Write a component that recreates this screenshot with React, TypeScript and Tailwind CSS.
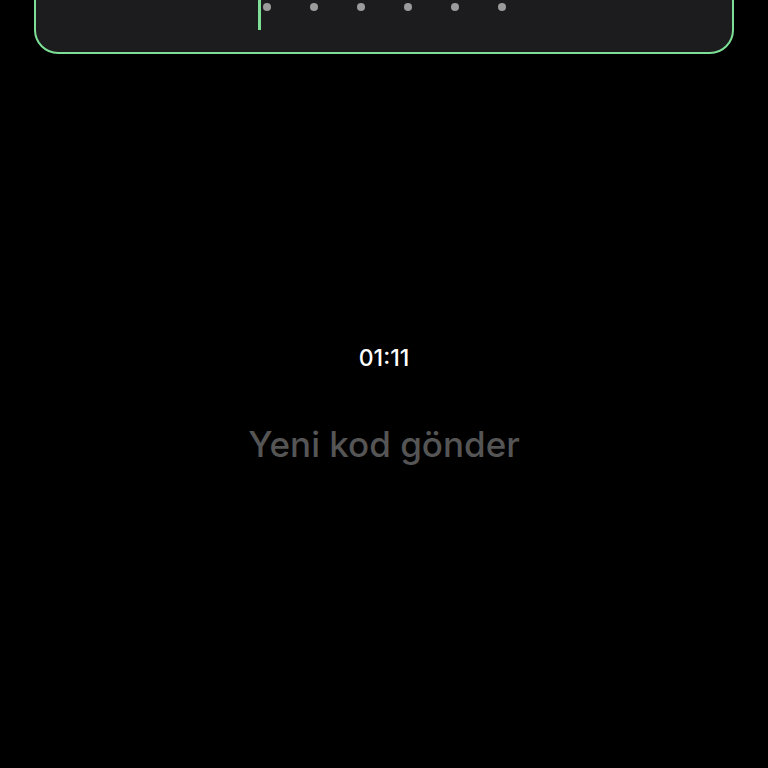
import React from "react";

export default function App() {
  return (
    <div
      className="w-full min-h-[768px] h-[768px] overflow-hidden bg-black flex flex-col"
      style={{ fontFamily: "Inter, 'Noto Sans', sans-serif" }}
    >
      <div className="mx-[34px] mt-[-66px] h-[120px] shrink-0 rounded-[24px] border-2 border-[#7ddf96] bg-[#1c1c1e] flex flex-col justify-end pb-[22px]">
        <div className="h-[46px] flex items-center justify-center gap-[39px]">
          {[0, 1, 2, 3, 4, 5].map((i) => (
            <div key={i} className="relative w-[8px] h-[8px]">
              <div className="w-[8px] h-[8px] rounded-full bg-[#9b9b9b]" />
              {i === 0 && (
                <div className="absolute left-[-5px] top-[-19px] w-[3px] h-[46px] bg-[#7ddf96]" />
              )}
            </div>
          ))}
        </div>
      </div>
      <div className="mt-[290px] text-center text-white text-[23px] leading-[28px] font-medium">
        01:11
      </div>
      <div className="mt-[51px] text-center text-[#555555] text-[35px] leading-[42px] font-medium">
        Yeni kod gönder
      </div>
    </div>
  );
}
